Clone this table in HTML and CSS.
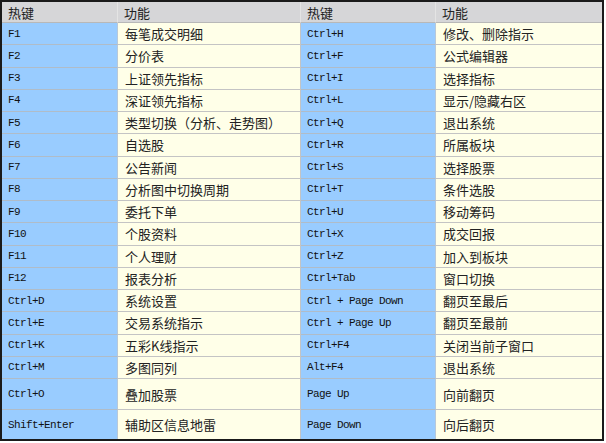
FILE: index.html
```html
<!DOCTYPE html>
<html lang="zh-CN">
<head>
<meta charset="utf-8">
<title>热键</title>
<link rel="stylesheet" href="styles.css">
</head>
<body>
<div class="table">
  <div class="cell head">热键</div><div class="cell head">功能</div><div class="cell head">热键</div><div class="cell head last">功能</div>

  <div class="cell key">F1</div><div class="cell fn">每笔成交明细</div><div class="cell key">Ctrl+H</div><div class="cell fn last">修改、删除指示</div>
  <div class="cell key">F2</div><div class="cell fn">分价表</div><div class="cell key">Ctrl+F</div><div class="cell fn last">公式编辑器</div>
  <div class="cell key">F3</div><div class="cell fn">上证领先指标</div><div class="cell key">Ctrl+I</div><div class="cell fn last">选择指标</div>
  <div class="cell key">F4</div><div class="cell fn">深证领先指标</div><div class="cell key">Ctrl+L</div><div class="cell fn last">显示/隐藏右区</div>
  <div class="cell key">F5</div><div class="cell fn">类型切换（分析、走势图）</div><div class="cell key">Ctrl+Q</div><div class="cell fn last">退出系统</div>
  <div class="cell key">F6</div><div class="cell fn">自选股</div><div class="cell key">Ctrl+R</div><div class="cell fn last">所属板块</div>
  <div class="cell key">F7</div><div class="cell fn">公告新闻</div><div class="cell key">Ctrl+S</div><div class="cell fn last">选择股票</div>
  <div class="cell key">F8</div><div class="cell fn">分析图中切换周期</div><div class="cell key">Ctrl+T</div><div class="cell fn last">条件选股</div>
  <div class="cell key">F9</div><div class="cell fn">委托下单</div><div class="cell key">Ctrl+U</div><div class="cell fn last">移动筹码</div>
  <div class="cell key">F10</div><div class="cell fn">个股资料</div><div class="cell key">Ctrl+X</div><div class="cell fn last">成交回报</div>
  <div class="cell key">F11</div><div class="cell fn">个人理财</div><div class="cell key">Ctrl+Z</div><div class="cell fn last">加入到板块</div>
  <div class="cell key">F12</div><div class="cell fn">报表分析</div><div class="cell key">Ctrl+Tab</div><div class="cell fn last">窗口切换</div>
  <div class="cell key">Ctrl+D</div><div class="cell fn">系统设置</div><div class="cell key">Ctrl + Page Down</div><div class="cell fn last">翻页至最后</div>
  <div class="cell key">Ctrl+E</div><div class="cell fn">交易系统指示</div><div class="cell key">Ctrl + Page Up</div><div class="cell fn last">翻页至最前</div>
  <div class="cell key">Ctrl+K</div><div class="cell fn">五彩K线指示</div><div class="cell key">Ctrl+F4</div><div class="cell fn last">关闭当前子窗口</div>
  <div class="cell key">Ctrl+M</div><div class="cell fn">多图同列</div><div class="cell key">Alt+F4</div><div class="cell fn last">退出系统</div>
  <div class="cell key">Ctrl+O</div><div class="cell fn">叠加股票</div><div class="cell key">Page Up</div><div class="cell fn last">向前翻页</div>
  <div class="cell key bottom">Shift+Enter</div><div class="cell fn bottom">辅助区信息地雷</div><div class="cell key bottom">Page Down</div><div class="cell fn last bottom">向后翻页</div>
</div>
</body>
</html>
```

FILE: styles.css
```css
html, body {
  margin: 0;
  padding: 0;
  background: #ffffff;
}

.table {
  display: grid;
  width: 604px;
  box-sizing: border-box;
  border: 2px solid #1a1a1a;
  grid-template-columns: 116px 183px 135px 166px;
  grid-template-rows: 21px repeat(16, 22.25px) 31px 29px;
}

.cell {
  box-sizing: border-box;
  border-right: 1px solid #c4c4c4;
  border-bottom: 1px solid #c4c4c4;
  display: flex;
  align-items: center;
  padding-left: 6px;
  white-space: nowrap;
  overflow: hidden;
}

.cell.last { border-right: none; }
.cell.bottom { border-bottom: none; }

.head {
  background: #d6d6d8;
  border-right-color: #e4e4e4;
  border-bottom-color: #b8b8b8;
  font-family: "Noto Sans CJK SC", "Noto Sans", sans-serif;
  font-size: 13px;
  color: #222;
}

.key {
  background: #99ccff;
  font-family: "Liberation Mono", "DejaVu Sans Mono", monospace;
  font-size: 11px;
  letter-spacing: -0.6px;
  color: #111;
  border-right-color: #b8c8d8;
  border-bottom-color: #b0bcc8;
}

.fn {
  background: #ffffe8;
  font-family: "Noto Sans CJK SC", "Noto Sans", sans-serif;
  font-size: 13px;
  color: #222;
  padding-left: 7px;
}
```
